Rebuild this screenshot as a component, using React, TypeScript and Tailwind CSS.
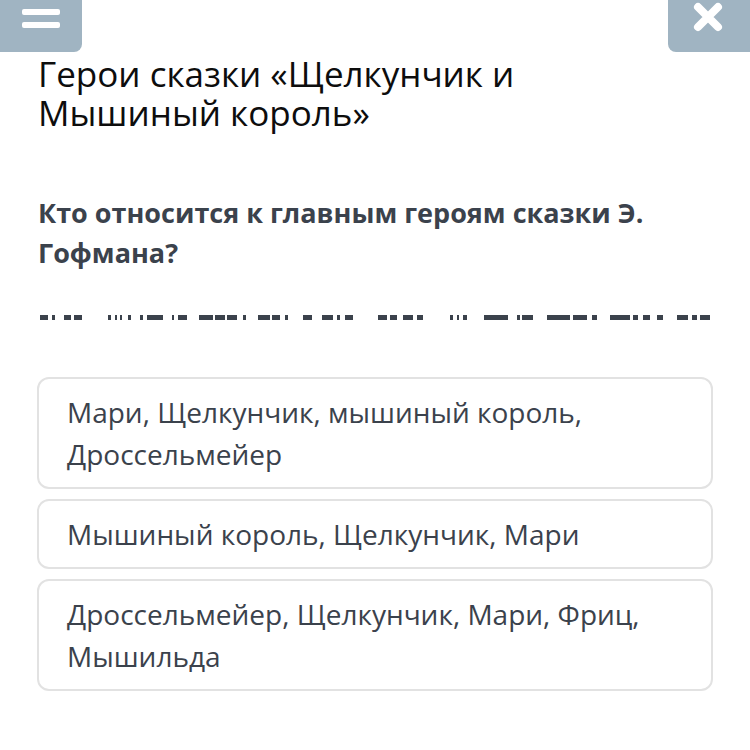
const dashesA: [number, number][] = [
  [40, 8], [52, 3], [64, 7], [74, 8], [108, 3], [115, 2], [120, 2], [128, 3], [140, 3],
  [147, 16], [172, 2], [178, 9], [199, 14], [215, 10], [227, 10], [243, 3], [258, 12],
  [272, 8], [285, 3], [303, 9], [322, 11], [337, 3], [345, 8],
]
const dashesB: [number, number][] = [
  [378, 9], [390, 7], [403, 10], [417, 6], [450, 3], [457, 2], [463, 4], [484, 24],
  [517, 3], [522, 11], [547, 23], [573, 14], [592, 5], [610, 20], [633, 5], [643, 7],
  [657, 6], [677, 11], [692, 5], [700, 10],
]

const options = [
  'Мари, Щелкунчик, мышиный король, Дроссельмейер',
  'Мышиный король, Щелкунчик, Мари',
  'Дроссельмейер, Щелкунчик, Мари, Фриц, Мышильда',
]

export default function App() {
  return (
    <div className="w-[750px] h-[750px] bg-white overflow-hidden" style={{ fontFamily: '"Open Sans", sans-serif' }}>
      {/* Top buttons */}
      <div className="flex justify-between h-[52px]">
        <button className="w-[82px] h-[52px] bg-[#a0b4c2] rounded-br-[8px] flex flex-col items-center justify-start gap-[7px] pt-[9px]">
          <span className="w-[38px] h-[6px] bg-white rounded-[2px]" />
          <span className="w-[38px] h-[6px] bg-white rounded-[2px]" />
        </button>
        <button className="w-[82px] h-[52px] bg-[#a0b4c2] rounded-bl-[8px] flex items-start justify-center pt-[2px] pr-[2px]">
          <svg width="30" height="30" viewBox="0 0 30 30">
            <path d="M5 5 L25 25 M25 5 L5 25" stroke="white" strokeWidth="8" strokeLinecap="round" />
          </svg>
        </button>
      </div>

      {/* Title */}
      <h1 className="mt-[2px] px-[38px] text-[35px] leading-[39px] text-[#0d0d0d]">
        Герои сказки «Щелкунчик и<br />Мышиный король»
      </h1>

      {/* Question */}
      <p className="mt-[61px] px-[38px] text-[27px] leading-[40px] font-bold text-[#3b424c]">
        Кто относится к главным героям сказки Э. Гофмана?
      </p>

      {/* Blanked line */}
      <svg className="block mt-[42px]" width="750" height="5">
        {[...dashesA, ...dashesB].map(([x, w], i) => (
          <rect key={i} x={x} y={0} width={w} height={5} fill="#3b424c" />
        ))}
      </svg>

      {/* Options */}
      <div className="mt-[57px] mx-[37px] flex flex-col gap-[10px]">
        {options.map((o) => (
          <div
            key={o}
            className="border-2 border-[#e2e2e2] rounded-[12px] pl-[28px] pr-[20px] py-[12px] text-[28px] leading-[42px] text-[#3b424c]"
          >
            {o}
          </div>
        ))}
      </div>
    </div>
  )
}
